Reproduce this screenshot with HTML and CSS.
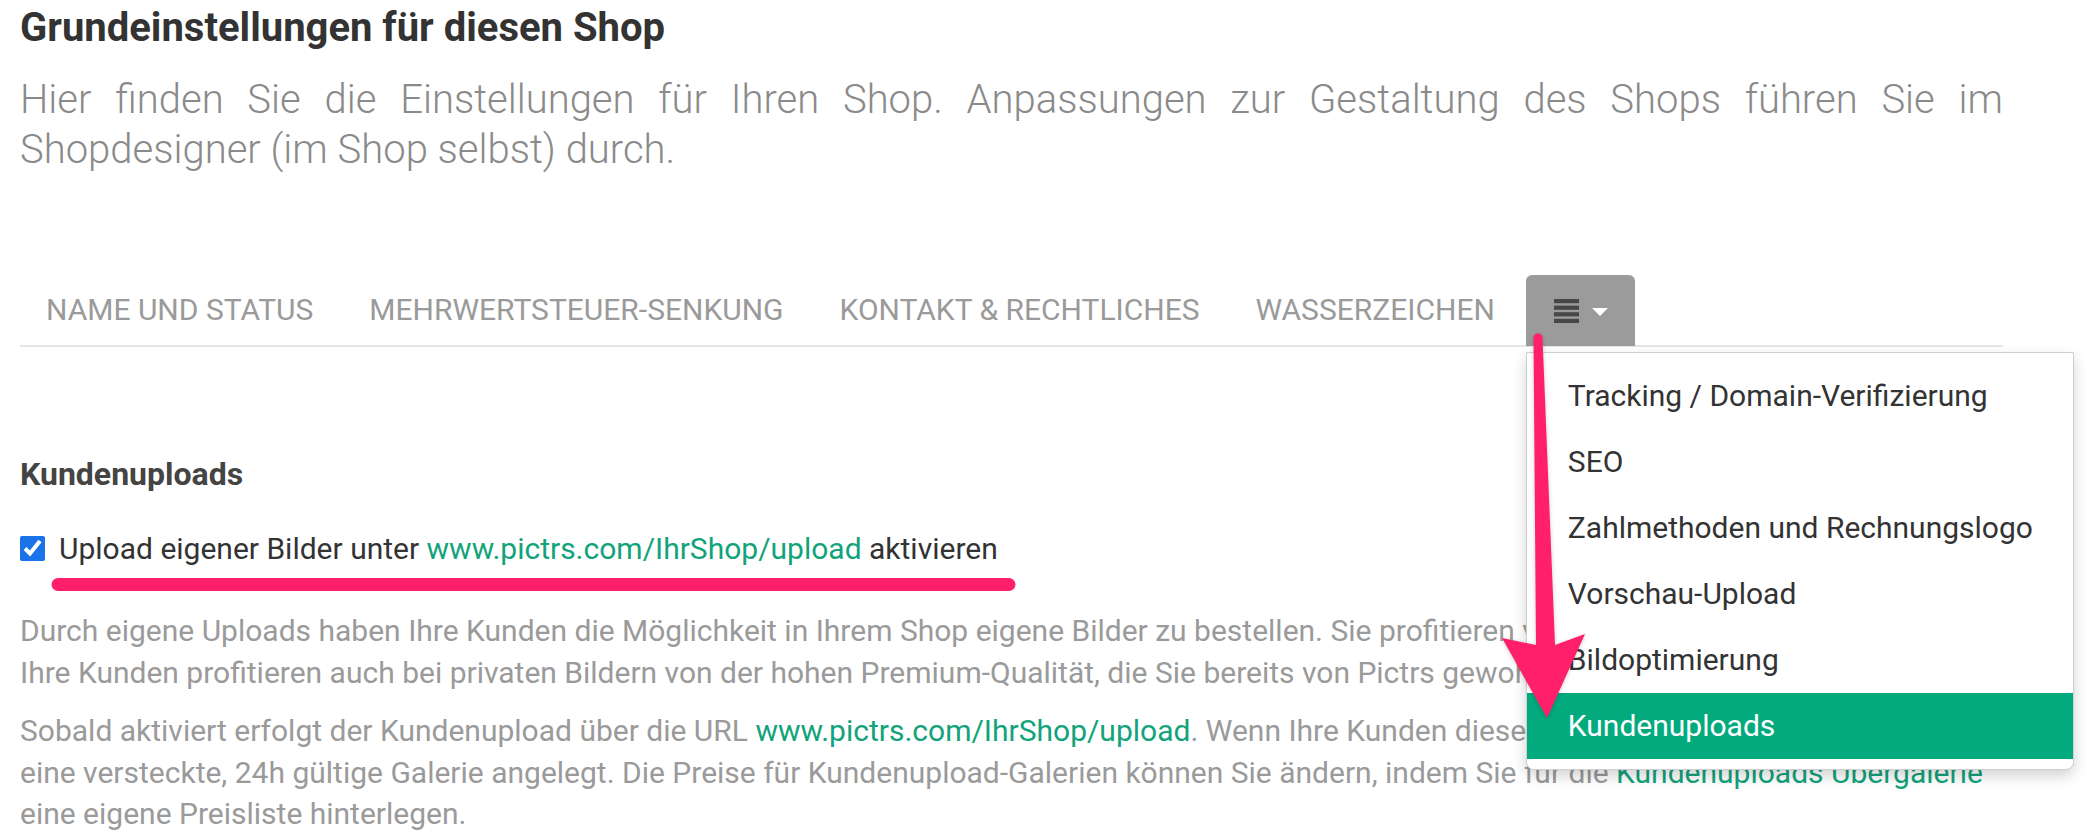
FILE: index.html
```html
<!DOCTYPE html>
<html lang="de">

<head>
	<meta charset="UTF-8">
	<meta name="viewport" content="width=device-width, initial-scale=1.0">
	<title>Grundeinstellungen für diesen Shop</title>
	<link rel="stylesheet" href="styles.css">
</head>

<body>
	<div class="page">
		<h1 class="title">Grundeinstellungen für diesen Shop</h1>
		<p class="lead">Hier finden Sie die Einstellungen für Ihren Shop. Anpassungen zur Gestaltung des Shops führen Sie im Shopdesigner (im Shop selbst) durch.</p>

		<ul class="tabs">
			<li><a href="#">NAME UND STATUS</a></li>
			<li><a href="#">MEHRWERTSTEUER-SENKUNG</a></li>
			<li><a href="#">KONTAKT &amp; RECHTLICHES</a></li>
			<li><a href="#">WASSERZEICHEN</a></li>
			<li class="more">
				<a href="#" class="more-toggle">
					<svg class="list-icon" width="25" height="24" viewBox="0 0 25 24">
						<rect x="0" y="0" width="25" height="4.2" />
						<rect x="0" y="6.6" width="25" height="4.2" />
						<rect x="0" y="13.2" width="25" height="4.2" />
						<rect x="0" y="19.8" width="25" height="4.2" />
					</svg>
					<span class="caret"></span>
				</a>
				<ul class="menu">
					<li><a href="#">Tracking / Domain-Verifizierung</a></li>
					<li><a href="#">SEO</a></li>
					<li><a href="#">Zahlmethoden und Rechnungslogo</a></li>
					<li><a href="#">Vorschau-Upload</a></li>
					<li><a href="#">Bildoptimierung</a></li>
					<li class="active"><a href="#">Kundenuploads</a></li>
				</ul>
			</li>
		</ul>

		<div class="section">
			<h3>Kundenuploads</h3>
			<label class="check">
				<input type="checkbox" checked>
				<span>Upload eigener Bilder unter <a href="#">www.pictrs.com/IhrShop/upload</a> aktivieren</span>
			</label>
			<p class="help">Durch eigene Uploads haben Ihre Kunden die Möglichkeit in Ihrem Shop eigene Bilder zu bestellen. Sie profitieren von zusätzlichen Umsätzen.<br>Ihre Kunden profitieren auch bei privaten Bildern von der hohen Premium-Qualität, die Sie bereits von Pictrs gewohnt sind.</p>
			<p class="help">Sobald aktiviert erfolgt der Kundenupload über die URL <a href="#">www.pictrs.com/IhrShop/upload</a>. Wenn Ihre Kunden diese Seite nutzen, wird automatisch<br>eine versteckte, 24h gültige Galerie angelegt. Die Preise für Kundenupload-Galerien können Sie ändern, indem Sie für die <a href="#">Kundenuploads Übergalerie</a><br>eine eigene Preisliste hinterlegen.</p>
		</div>
	</div>

	<!-- Markierungen im Screenshot -->
	<svg class="marks" width="2098" height="836" viewBox="0 0 2098 836">
		<line x1="58" y1="584.5" x2="1009" y2="584.5" stroke="#ff1f6b" stroke-width="13" stroke-linecap="round" />
		<g class="arrow" fill="#ff1f6b">
			<circle cx="1538" cy="338" r="4.5" />
			<polygon points="1533.5,338 1542.5,338 1555,645 1585,634 1547,718 1502,638 1536,645" />
		</g>
	</svg>
</body>

</html>
```

FILE: styles.css
```css
body {
	margin: 0;
	background: #fff;
	color: #333;
	font-family: Roboto, "Liberation Sans", sans-serif;
}

a {
	text-decoration: none;
}

.page {
	padding: 5px 95px 0 20px;
}

.title {
	margin: 0;
	font-size: 40px;
	line-height: 46px;
	font-weight: 700;
	color: #333;
}

.lead {
	margin: 24px 0 0;
	font-size: 40px;
	line-height: 50px;
	font-weight: 300;
	color: #8a8a8a;
	text-align: justify;
}

.tabs {
	display: flex;
	align-items: flex-start;
	margin: 100px 0 0;
	padding: 0;
	list-style: none;
	border-bottom: 2px solid #e6e6e6;
}

.tabs > li > a {
	display: block;
	padding: 0 28px;
	font-size: 30px;
	line-height: 70px;
	color: #9a9a9a;
}

.tabs > li:first-child > a {
	padding-left: 26px;
}

.more {
	position: relative;
	margin-left: 3px;
	margin-bottom: -1px;
}

.tabs > li > .more-toggle {
	display: flex;
	align-items: center;
	gap: 13px;
	height: 71px;
	padding: 0 27px 0 28px;
	background: #9b9b9b;
	border-radius: 6px 6px 0 0;
	box-sizing: border-box;
}

.list-icon {
	fill: #474747;
}

.caret {
	width: 0;
	height: 0;
	margin-top: 3px;
	border-left: 8px solid transparent;
	border-right: 8px solid transparent;
	border-top: 8px solid #fff;
}

.menu {
	position: absolute;
	top: calc(100% + 6px);
	left: 0;
	z-index: 5;
	width: 548px;
	margin: 0;
	padding: 10px 0;
	list-style: none;
	background: #fff;
	border: 1px solid #cfcfcf;
	border-radius: 0 0 8px 8px;
	box-shadow: 0 6px 14px rgba(0, 0, 0, 0.18);
	box-sizing: border-box;
}

.menu a {
	display: block;
	padding-left: 41px;
	font-size: 30px;
	line-height: 66px;
	color: #333;
}

.menu .active a {
	background: #02aa7e;
	color: #fff;
}

.section h3 {
	margin: 109px 0 0;
	font-size: 32px;
	line-height: 36px;
	font-weight: 700;
	color: #444;
}

.check {
	display: flex;
	align-items: center;
	gap: 14px;
	margin-top: 36px;
	font-size: 30px;
	line-height: 41px;
	color: #333;
}

.check input {
	width: 25px;
	height: 25px;
	margin: 0;
	accent-color: #1a73e8;
}

.check a,
.help a {
	color: #12a37b;
}

.help {
	margin: 41px 0 0;
	font-size: 30px;
	line-height: 41.5px;
	color: #9a9a9a;
	white-space: nowrap;
}

.help + .help {
	margin-top: 17px;
}

.marks {
	position: absolute;
	top: 0;
	left: 0;
	z-index: 10;
	pointer-events: none;
}

.arrow {
	filter: drop-shadow(0 1px 2px rgba(0, 0, 0, 0.2));
}
```
